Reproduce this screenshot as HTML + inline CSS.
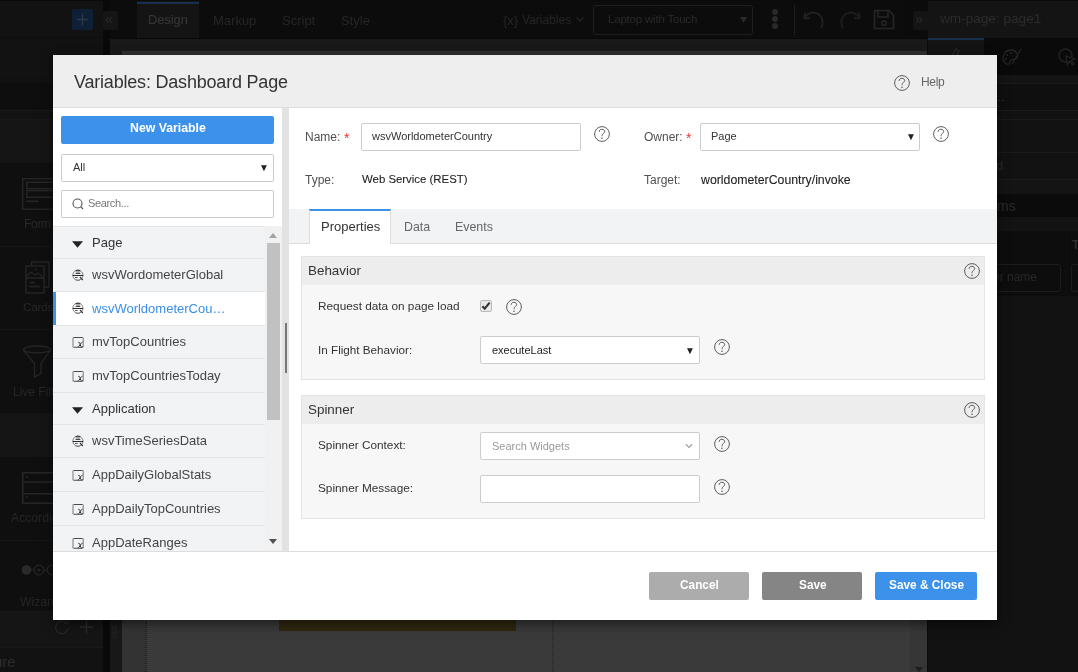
<!DOCTYPE html>
<html><head><meta charset="utf-8">
<style>
*{box-sizing:border-box;margin:0;padding:0}
html,body{width:1078px;height:672px;overflow:hidden;background:#121212;font-family:"Liberation Sans",sans-serif}
.a{position:absolute}
.t{position:absolute;white-space:nowrap;line-height:1;will-change:transform}
#bg{position:absolute;left:0;top:0;width:1078px;height:672px;overflow:hidden}
#dlg{position:absolute;left:53px;top:55px;width:944px;height:565px;background:#fff;overflow:hidden;box-shadow:0 4px 10px rgba(0,0,0,.5)}
</style></head><body>
<div id="bg">
<div class="a" style="left:0px;top:0px;width:1078px;height:672px;background:#121212"></div>
<div class="a" style="left:0px;top:0px;width:1078px;height:1px;background:#0a0a0a"></div>
<div class="a" style="left:110px;top:1px;width:818px;height:37px;background:#0c0c0c"></div>
<div class="a" style="left:0px;top:1px;width:103px;height:37px;background:#121212"></div>
<div class="a" style="left:103px;top:0px;width:7px;height:672px;background:#090909"></div>
<div class="a" style="left:72px;top:9px;width:21px;height:21px;background:#0f2036;border-radius:2px"></div>
<svg class="a" style="left:76px;top:13px" width="13" height="13" viewBox="0 0 13 13"><path d="M6.5 1 V12 M1 6.5 H12" stroke="#2a3a4a" stroke-width="1.3"/></svg>
<div class="a" style="left:103px;top:11px;width:15px;height:19px;background:#151515;border-radius:2px"></div>
<div class="t" style="left:105px;top:12.15px;font-size:14px;color:#2c2c2c;font-weight:400;letter-spacing:0px;">&laquo;</div>
<div class="a" style="left:137px;top:1px;width:62px;height:37px;background:#141414"></div>
<div class="a" style="left:137px;top:2px;width:62px;height:2px;background:#17304d"></div>
<div class="t" style="left:148px;top:13.66px;font-size:12.8px;color:#363636;font-weight:400;letter-spacing:0px;-webkit-text-stroke:0.2px #363636">Design</div>
<div class="t" style="left:213px;top:13.50px;font-size:13px;color:#262626;font-weight:400;letter-spacing:0px;">Markup</div>
<div class="t" style="left:281.8px;top:13.50px;font-size:13px;color:#262626;font-weight:400;letter-spacing:0px;">Script</div>
<div class="t" style="left:340.5px;top:13.50px;font-size:13px;color:#262626;font-weight:400;letter-spacing:0px;">Style</div>
<div class="t" style="left:502.5px;top:13.50px;font-size:13px;color:#262626;font-weight:400;letter-spacing:0px;">{x}</div>
<div class="t" style="left:521.7px;top:14.14px;font-size:12px;color:#262626;font-weight:400;letter-spacing:0px;">Variables</div>
<svg class="a" style="left:576px;top:17px" width="8" height="5" viewBox="0 0 8 5"><path d="M0.5 0.5 L4 4 L7.5 0.5" fill="none" stroke="#262626" stroke-width="1.1"/></svg>
<div class="a" style="left:593px;top:5px;width:160px;height:30px;border:1px solid #1f1f1f;border-radius:3px"></div>
<div class="t" style="left:608px;top:14.47px;font-size:11.5px;color:#2a2a2a;font-weight:400;letter-spacing:-0.2px;">Laptop with Touch</div>
<svg class="a" style="left:740px;top:17px" width="7" height="6" viewBox="0 0 7 6"><path d="M0 0 H7 L3.5 6Z" fill="#2a2a2a"/></svg>
<div class="a" style="left:772px;top:9px;width:6px;height:6px;border-radius:50%;background:#2a2a2a"></div>
<div class="a" style="left:772px;top:16px;width:6px;height:6px;border-radius:50%;background:#2a2a2a"></div>
<div class="a" style="left:772px;top:23px;width:6px;height:6px;border-radius:50%;background:#2a2a2a"></div>
<div class="a" style="left:794px;top:5px;width:1px;height:30px;background:#1c1c1c"></div>
<svg class="a" style="left:802px;top:10px" width="24" height="20" viewBox="0 0 24 20"><path d="M2 8.5 L3.2 2.5 M2 8.5 L8 8" fill="none" stroke="#222" stroke-width="1.8"/><path d="M2.8 7.6 C6 2 14 0.5 18.5 6 C21.5 10 21 15 19 18" fill="none" stroke="#222" stroke-width="1.8"/></svg>
<svg class="a" style="left:838px;top:10px" width="24" height="20" viewBox="0 0 24 20"><path d="M22 8.5 L20.8 2.5 M22 8.5 L16 8" fill="none" stroke="#1e1e1e" stroke-width="1.8"/><path d="M21.2 7.6 C18 2 10 0.5 5.5 6 C2.5 10 3 15 5 18" fill="none" stroke="#1e1e1e" stroke-width="1.8"/></svg>
<svg class="a" style="left:873px;top:9px" width="22" height="21" viewBox="0 0 22 21"><path d="M1.5 1.5 H16 L20.5 6 V19.5 H1.5 Z M5 1.5 V8 H15 V1.5" fill="none" stroke="#262626" stroke-width="1.6"/><circle cx="11" cy="14" r="2.3" fill="none" stroke="#262626" stroke-width="1.5"/></svg>
<div class="a" style="left:903px;top:1px;width:25px;height:37px;background:#0b0b0b"></div>
<div class="a" style="left:913px;top:11px;width:15px;height:19px;background:#141414;border-radius:2px"></div>
<div class="t" style="left:915px;top:12.15px;font-size:14px;color:#2c2c2c;font-weight:400;letter-spacing:0px;">&raquo;</div>
<div class="a" style="left:928px;top:1px;width:150px;height:37px;background:#141414"></div>
<div class="t" style="left:940px;top:12.49px;font-size:13.6px;color:#2c2c2c;font-weight:400;letter-spacing:0px;">wm-page: page1</div>
<div class="a" style="left:928px;top:38px;width:150px;height:37px;background:#0a0a0a"></div>
<div class="a" style="left:928px;top:38px;width:56px;height:37px;background:#141414"></div>
<div class="a" style="left:928px;top:38px;width:56px;height:2px;background:#17304d"></div>
<svg class="a" style="left:944px;top:46px" width="20" height="20" viewBox="0 0 20 20"><path d="M12 3 L15 5 L8 16 L6 14 Z" fill="none" stroke="#262626" stroke-width="1.5"/></svg>
<svg class="a" style="left:1002px;top:48px" width="20" height="18" viewBox="0 0 20 18"><path d="M9 2 C3 2 1 7 1 10 C1 14 4 17 7 16 C9 15 7 13 9 12 C11 11 14 12 15 10 C17 7 14 2 9 2 Z" fill="none" stroke="#242424" stroke-width="1.3"/><circle cx="5" cy="7" r="1" fill="#242424"/><circle cx="9" cy="5" r="1" fill="#242424"/><circle cx="4" cy="11" r="1" fill="#242424"/><path d="M19 1 L10 16" stroke="#242424" stroke-width="1.3"/></svg>
<svg class="a" style="left:1058px;top:48px" width="20" height="18" viewBox="0 0 20 18"><circle cx="7.5" cy="7.5" r="6.5" fill="none" stroke="#242424" stroke-width="1.4"/><path d="M8 8 L17 11 L13 12.5 L16 16 L14.5 17 L11.5 13.5 L9.5 16.5 Z" fill="#0a0a0a" stroke="#242424" stroke-width="1.2"/></svg>
<div class="a" style="left:928px;top:75px;width:150px;height:8px;background:#141414"></div>
<div class="a" style="left:928px;top:83px;width:150px;height:1px;background:#1b1b1b"></div>
<div class="a" style="left:928px;top:84px;width:150px;height:26px;background:#0f0f0f"></div>
<div class="a" style="left:928px;top:110px;width:150px;height:1px;background:#1b1b1b"></div>
<div class="a" style="left:998px;top:100px;width:2px;height:1px;background:#262626"></div>
<div class="a" style="left:1002px;top:100px;width:2px;height:1px;background:#262626"></div>
<div class="a" style="left:997px;top:106px;width:2px;height:1px;background:#262626"></div>
<div class="a" style="left:928px;top:119px;width:150px;height:1px;background:#1a1a1a"></div>
<div class="a" style="left:928px;top:152px;width:150px;height:1px;background:#1a1a1a"></div>
<div class="t" style="left:996px;top:158.50px;font-size:13px;color:#2a2a2a;font-weight:400;letter-spacing:0px;">d</div>
<div class="a" style="left:928px;top:179px;width:150px;height:1px;background:#1b1b1b"></div>
<div class="a" style="left:928px;top:180px;width:150px;height:14px;background:#141414"></div>
<div class="a" style="left:928px;top:194px;width:150px;height:23px;background:#0b0b0b"></div>
<div class="t" style="left:997px;top:198.65px;font-size:14px;color:#2b2b2b;font-weight:400;letter-spacing:0px;">ms</div>
<div class="a" style="left:928px;top:217px;width:150px;height:14px;background:#131313"></div>
<div class="a" style="left:928px;top:231px;width:150px;height:441px;background:#0d0d0d"></div>
<div class="a" style="left:928px;top:296px;width:150px;height:376px;background:#121212"></div>
<div class="t" style="left:1072px;top:238.84px;font-size:12px;color:#2e2e2e;font-weight:700;letter-spacing:0px;">T</div>
<div class="a" style="left:960px;top:264px;width:101px;height:28px;border:1px solid #1c1c1c;border-radius:3px"></div>
<div class="t" style="left:993px;top:270.84px;font-size:12px;color:#282828;font-weight:400;letter-spacing:0px;">er name</div>
<div class="a" style="left:1071px;top:264px;width:19px;height:28px;border:1px solid #1c1c1c;border-radius:3px"></div>
<div class="a" style="left:1066px;top:231px;width:1px;height:65px;background:#101010"></div>
<div class="a" style="left:0px;top:37px;width:103px;height:1px;background:#0e0e0e"></div>
<div class="a" style="left:0px;top:73px;width:103px;height:1px;background:#161616"></div>
<div class="a" style="left:0px;top:83px;width:103px;height:27px;background:#0e0e0e"></div>
<div class="a" style="left:0px;top:110px;width:103px;height:1px;background:#181818"></div>
<div class="a" style="left:0px;top:119px;width:103px;height:1px;background:#181818"></div>
<div class="a" style="left:0px;top:120px;width:103px;height:43px;background:#151515"></div>
<div class="a" style="left:0px;top:163px;width:103px;height:448px;background:#0f0f0f"></div>
<svg class="a" style="left:22px;top:178px" width="40" height="32" viewBox="0 0 40 32"><rect x="0.7" y="0.7" width="38" height="30.5" fill="none" stroke="#252525" stroke-width="1.4"/><rect x="4.8" y="4.3" width="30" height="6.3" fill="none" stroke="#262626" stroke-width="1.5"/><rect x="4.8" y="12.6" width="30" height="6.6" fill="none" stroke="#262626" stroke-width="1.5"/><path d="M4.5 23.3 H16.5" stroke="#262626" stroke-width="1.7"/></svg>
<div class="t" style="left:24.4px;top:217.84px;font-size:12px;color:#282828;font-weight:400;letter-spacing:-0.3px;">Form</div>
<div class="a" style="left:0px;top:246px;width:103px;height:1px;background:#161616"></div>
<svg class="a" style="left:25px;top:261px" width="28" height="34" viewBox="0 0 28 34"><path d="M6.5 5 V1 H24 V26 H19" fill="none" stroke="#252525" stroke-width="1.4"/><rect x="1" y="5" width="18" height="27" fill="none" stroke="#252525" stroke-width="1.4"/><path d="M1 16 L6 11 L10 14 L13 12 L19 17 M1 17 H19 M4.5 21.5 H10 M4.5 25.5 H15" fill="none" stroke="#252525" stroke-width="1.3"/><circle cx="11" cy="8.5" r="0.9" fill="#252525"/></svg>
<div class="t" style="left:22.6px;top:301.51px;font-size:11.8px;color:#282828;font-weight:400;letter-spacing:-0.3px;">Cards</div>
<div class="a" style="left:0px;top:329px;width:103px;height:1px;background:#161616"></div>
<svg class="a" style="left:22px;top:345px" width="34" height="34" viewBox="0 0 34 34"><ellipse cx="15" cy="4.5" rx="13.5" ry="3.5" fill="none" stroke="#262626" stroke-width="1.3"/><path d="M1.5 5 L12.5 18.5 V32 L19 28.5 V18.5 L28.5 5" fill="none" stroke="#262626" stroke-width="1.3"/></svg>
<div class="t" style="left:12.9px;top:385.54px;font-size:12px;color:#262626;font-weight:400;letter-spacing:0px;">Live Filter</div>
<div class="a" style="left:0px;top:413px;width:103px;height:44px;background:#151515"></div>
<svg class="a" style="left:22px;top:472px" width="40" height="32" viewBox="0 0 40 32"><rect x="0.8" y="0.8" width="38" height="30.4" fill="none" stroke="#262626" stroke-width="1.6"/><path d="M0.7 10 H39 M0.7 21.8 H39" stroke="#262626" stroke-width="1.6"/><path d="M4 5 H6 M4 25 H6" stroke="#303030" stroke-width="1.2"/></svg>
<div class="t" style="left:11.3px;top:511.97px;font-size:12.2px;color:#262626;font-weight:400;letter-spacing:0px;">Accordion</div>
<div class="a" style="left:0px;top:540px;width:103px;height:1px;background:#151515"></div>
<svg class="a" style="left:21px;top:563px" width="40" height="14" viewBox="0 0 40 14"><circle cx="5.5" cy="7" r="4.8" fill="#2a2a2a"/><path d="M10 7 H13" stroke="#262626"/><circle cx="18" cy="7" r="4.8" fill="none" stroke="#262626" stroke-width="1.2"/><circle cx="18" cy="7" r="1.6" fill="#262626"/><path d="M23 7 H26" stroke="#262626"/><circle cx="31" cy="7" r="4.8" fill="none" stroke="#262626" stroke-width="1.2"/></svg>
<div class="t" style="left:20.3px;top:595.57px;font-size:12.2px;color:#262626;font-weight:400;letter-spacing:0px;">Wizard</div>
<div class="a" style="left:0px;top:611px;width:103px;height:1px;background:#171717"></div>
<div class="a" style="left:0px;top:612px;width:103px;height:35px;background:#151515"></div>
<svg class="a" style="left:54px;top:620px" width="16" height="15" viewBox="0 0 16 15"><path d="M13 4 A6.2 6.2 0 1 0 14 8" fill="none" stroke="#262626" stroke-width="1.3"/><path d="M10 2.5 L13.5 4 L13.8 0.5" fill="none" stroke="#262626" stroke-width="1.3"/></svg>
<svg class="a" style="left:79px;top:620px" width="15" height="14" viewBox="0 0 15 14"><path d="M7.5 0.5 V13.5 M1 7 H14" stroke="#2c2c2c" stroke-width="1.4"/></svg>
<div class="a" style="left:0px;top:647px;width:103px;height:1px;background:#191919"></div>
<div class="t" style="left:0px;top:654.30px;font-size:15px;color:#2c2c2c;font-weight:400;letter-spacing:0px;margin-left:-6px">ure</div>
<div class="a" style="left:110px;top:38px;width:818px;height:634px;background:#191919"></div>
<div class="a" style="left:110px;top:38px;width:818px;height:1px;background:#080808"></div>
<div class="a" style="left:122px;top:51px;width:806px;height:621px;background:#3a3a3a"></div>
<div class="a" style="left:122px;top:51px;width:805px;height:4px;background:#2f2f2f"></div>
<div class="a" style="left:110px;top:55px;width:12px;height:617px;background:#181818"></div>
<div class="a" style="left:122px;top:55px;width:24px;height:617px;background:#333"></div>
<div class="a" style="left:145px;top:55px;width:2px;height:617px;background:repeating-linear-gradient(#222 0 1px,#3a3a3a 1px 2px)"></div>
<div class="a" style="left:552px;top:55px;width:2px;height:617px;background:repeating-linear-gradient(#2a2a2a 0 1px,#3a3a3a 1px 2px)"></div>
<div class="a" style="left:279px;top:620px;width:237px;height:11px;background:#2f2710"></div>
<div class="a" style="left:910px;top:55px;width:17px;height:617px;background:#363636"></div>
<div class="a" style="left:927px;top:38px;width:1px;height:634px;background:#0b0b0b"></div>
<svg class="a" style="left:915px;top:667px" width="8" height="5" viewBox="0 0 8 5"><path d="M0 0 H8 L4 5Z" fill="#1e1e1e"/></svg>
<div class="t" style="left:117.5px;top:625px;font-size:8px;color:#262626;transform:rotate(90deg);transform-origin:0 0">650</div>
</div>
<div id="dlg">
<div class="a" style="left:0px;top:0px;width:944px;height:52px;background:#eee"></div>
<div class="a" style="left:0px;top:51px;width:944px;height:1px;background:#f0f0f0"></div>
<div class="a" style="left:0px;top:52px;width:944px;height:1px;background:#dcdcdc"></div>
<div class="t" style="left:21.00px;top:17.76px;font-size:18px;color:#333;font-weight:400;letter-spacing:-0.2px;">Variables: Dashboard Page</div>
<svg class="a" style="left:841px;top:20px" width="16" height="16" viewBox="0 0 16 16"><circle cx="8" cy="8" r="7.4" fill="none" stroke="#5c5c5c" stroke-width="1"/><path d="M5.1 5.9 C5.1 4.2 6.4 3.3 7.9 3.3 C9.5 3.3 10.7 4.3 10.7 5.7 C10.7 7.3 8.1 7.6 8.1 9.4 V10.3" fill="none" stroke="#5c5c5c" stroke-width="1"/><circle cx="8" cy="12.3" r="0.8" fill="#5c5c5c"/></svg>
<div class="t" style="left:867.70px;top:20.84px;font-size:12px;color:#666;font-weight:400;letter-spacing:-0.35px;">Help</div>
<div class="a" style="left:8px;top:61px;width:213px;height:28px;background:#3c92ea;border-radius:2px"></div>
<div class="t" style="left:77.00px;top:67.39px;font-size:12.3px;color:#fff;font-weight:700;letter-spacing:0px;">New Variable</div>
<div class="a" style="left:8px;top:99px;width:213px;height:28px;background:#fff;border:1px solid #ccc;border-radius:2px"></div>
<div class="t" style="left:19.70px;top:106.69px;font-size:11px;color:#333;font-weight:400;letter-spacing:0px;">All</div>
<div class="t" style="left:206.00px;top:108.03px;font-size:10px;color:#222;font-weight:400;letter-spacing:0px;">&#9660;</div>
<div class="a" style="left:8px;top:135px;width:213px;height:28px;background:#fff;border:1px solid #ccc;border-radius:2px"></div>
<svg class="a" style="left:19px;top:143px" width="12" height="12" viewBox="0 0 12 12"><circle cx="5.5" cy="5.5" r="4.5" fill="none" stroke="#555" stroke-width="1.1"/><path d="M8.7 8.7 L11 11" stroke="#555" stroke-width="1.2"/></svg>
<div class="t" style="left:34.70px;top:142.69px;font-size:11px;color:#777;font-weight:400;letter-spacing:-0.35px;">Search...</div>
<div class="a" style="left:0px;top:171px;width:229px;height:325px;background:#f2f3f5"></div>
<div class="a" style="left:0px;top:171px;width:212px;height:1px;background:#e3e6e8"></div>
<div class="a" style="left:0px;top:203px;width:212px;height:1px;background:#e1e5e8"></div>
<svg class="a" style="left:19px;top:186px" width="11" height="7" viewBox="0 0 11 7"><path d="M0 0.3 H11 L5.5 6.8 Z" fill="#222"/></svg>
<div class="t" style="left:39.00px;top:180.60px;font-size:13px;color:#333;font-weight:400;letter-spacing:0px;">Page</div>
<div class="a" style="left:0px;top:236px;width:212px;height:1px;background:#e1e5e8"></div>
<svg class="a" style="left:19px;top:214px" width="12" height="12" viewBox="0 0 12 12"><circle cx="5.9" cy="6.2" r="5.1" fill="none" stroke="#808080" stroke-width="1"/><path d="M3.8 1.9 Q6 1.1 8.2 1.9 L7.6 4.2 H4.4 Z" fill="#aaa"/><path d="M3.6 1.6 Q6 0.7 8.3 1.6" fill="none" stroke="#333" stroke-width="1"/><path d="M3.6 4.5 H8.3" stroke="#444" stroke-width="1"/><path d="M0.8 6.5 H11.1" stroke="#2a2a2a" stroke-width="1"/><path d="M3 8.5 H5.6" stroke="#555" stroke-width="1"/><path d="M8 8 L10.8 11" stroke="#333" stroke-width="1.1"/><path d="M3.8 10.9 Q6 11.7 8 11" fill="none" stroke="#777" stroke-width="0.9"/></svg>
<div class="t" style="left:39.00px;top:213.10px;font-size:13px;color:#444;font-weight:400;letter-spacing:0px;">wsvWordometerGlobal</div>
<div class="a" style="left:0px;top:237px;width:212px;height:33px;background:#fff"></div>
<div class="a" style="left:0px;top:237px;width:3px;height:33px;background:#3c92ea"></div>
<div class="a" style="left:0px;top:270px;width:212px;height:1px;background:#e1e5e8"></div>
<svg class="a" style="left:19px;top:247px" width="12" height="12" viewBox="0 0 12 12"><circle cx="5.9" cy="6.2" r="5.1" fill="none" stroke="#808080" stroke-width="1"/><path d="M3.8 1.9 Q6 1.1 8.2 1.9 L7.6 4.2 H4.4 Z" fill="#aaa"/><path d="M3.6 1.6 Q6 0.7 8.3 1.6" fill="none" stroke="#333" stroke-width="1"/><path d="M3.6 4.5 H8.3" stroke="#444" stroke-width="1"/><path d="M0.8 6.5 H11.1" stroke="#2a2a2a" stroke-width="1"/><path d="M3 8.5 H5.6" stroke="#555" stroke-width="1"/><path d="M8 8 L10.8 11" stroke="#333" stroke-width="1.1"/><path d="M3.8 10.9 Q6 11.7 8 11" fill="none" stroke="#777" stroke-width="0.9"/></svg>
<div class="t" style="left:39.00px;top:246.60px;font-size:13px;color:#3a8ee6;font-weight:400;letter-spacing:0px;">wsvWorldometerCou&hellip;</div>
<div class="a" style="left:0px;top:303px;width:212px;height:1px;background:#e1e5e8"></div>
<svg class="a" style="left:19px;top:281px" width="12" height="12" viewBox="0 0 12 12"><path d="M1 1.5 V11.3 M11.2 1.5 V11.3" stroke="#777" stroke-width="1"/><path d="M1.5 1.5 H10.7 M1.5 11.3 H10.7" stroke="#4a4a4a" stroke-width="1.1"/><path d="M6.3 6.4 Q7.3 5.9 7.8 7.1 L8.7 10.2 Q9.2 11.1 10.6 10.6 M10.6 6.1 Q9.6 6.1 8.3 8.2 L7.1 10.2 Q6.5 11 5.8 10.7" fill="none" stroke="#3a3a3a" stroke-width="1"/></svg>
<div class="t" style="left:39.00px;top:280.10px;font-size:13px;color:#444;font-weight:400;letter-spacing:0px;">mvTopCountries</div>
<div class="a" style="left:0px;top:337px;width:212px;height:1px;background:#e1e5e8"></div>
<svg class="a" style="left:19px;top:315px" width="12" height="12" viewBox="0 0 12 12"><path d="M1 1.5 V11.3 M11.2 1.5 V11.3" stroke="#777" stroke-width="1"/><path d="M1.5 1.5 H10.7 M1.5 11.3 H10.7" stroke="#4a4a4a" stroke-width="1.1"/><path d="M6.3 6.4 Q7.3 5.9 7.8 7.1 L8.7 10.2 Q9.2 11.1 10.6 10.6 M10.6 6.1 Q9.6 6.1 8.3 8.2 L7.1 10.2 Q6.5 11 5.8 10.7" fill="none" stroke="#3a3a3a" stroke-width="1"/></svg>
<div class="t" style="left:39.00px;top:313.60px;font-size:13px;color:#444;font-weight:400;letter-spacing:0px;">mvTopCountriesToday</div>
<div class="a" style="left:0px;top:369px;width:212px;height:1px;background:#e1e5e8"></div>
<svg class="a" style="left:19px;top:352px" width="11" height="7" viewBox="0 0 11 7"><path d="M0 0.3 H11 L5.5 6.8 Z" fill="#222"/></svg>
<div class="t" style="left:39.00px;top:346.60px;font-size:13px;color:#333;font-weight:400;letter-spacing:0px;">Application</div>
<div class="a" style="left:0px;top:402px;width:212px;height:1px;background:#e1e5e8"></div>
<svg class="a" style="left:19px;top:380px" width="12" height="12" viewBox="0 0 12 12"><circle cx="5.9" cy="6.2" r="5.1" fill="none" stroke="#808080" stroke-width="1"/><path d="M3.8 1.9 Q6 1.1 8.2 1.9 L7.6 4.2 H4.4 Z" fill="#aaa"/><path d="M3.6 1.6 Q6 0.7 8.3 1.6" fill="none" stroke="#333" stroke-width="1"/><path d="M3.6 4.5 H8.3" stroke="#444" stroke-width="1"/><path d="M0.8 6.5 H11.1" stroke="#2a2a2a" stroke-width="1"/><path d="M3 8.5 H5.6" stroke="#555" stroke-width="1"/><path d="M8 8 L10.8 11" stroke="#333" stroke-width="1.1"/><path d="M3.8 10.9 Q6 11.7 8 11" fill="none" stroke="#777" stroke-width="0.9"/></svg>
<div class="t" style="left:39.00px;top:379.10px;font-size:13px;color:#444;font-weight:400;letter-spacing:0px;">wsvTimeSeriesData</div>
<div class="a" style="left:0px;top:436px;width:212px;height:1px;background:#e1e5e8"></div>
<svg class="a" style="left:19px;top:414px" width="12" height="12" viewBox="0 0 12 12"><path d="M1 1.5 V11.3 M11.2 1.5 V11.3" stroke="#777" stroke-width="1"/><path d="M1.5 1.5 H10.7 M1.5 11.3 H10.7" stroke="#4a4a4a" stroke-width="1.1"/><path d="M6.3 6.4 Q7.3 5.9 7.8 7.1 L8.7 10.2 Q9.2 11.1 10.6 10.6 M10.6 6.1 Q9.6 6.1 8.3 8.2 L7.1 10.2 Q6.5 11 5.8 10.7" fill="none" stroke="#3a3a3a" stroke-width="1"/></svg>
<div class="t" style="left:39.00px;top:412.60px;font-size:13px;color:#444;font-weight:400;letter-spacing:0px;">AppDailyGlobalStats</div>
<div class="a" style="left:0px;top:470px;width:212px;height:1px;background:#e1e5e8"></div>
<svg class="a" style="left:19px;top:448px" width="12" height="12" viewBox="0 0 12 12"><path d="M1 1.5 V11.3 M11.2 1.5 V11.3" stroke="#777" stroke-width="1"/><path d="M1.5 1.5 H10.7 M1.5 11.3 H10.7" stroke="#4a4a4a" stroke-width="1.1"/><path d="M6.3 6.4 Q7.3 5.9 7.8 7.1 L8.7 10.2 Q9.2 11.1 10.6 10.6 M10.6 6.1 Q9.6 6.1 8.3 8.2 L7.1 10.2 Q6.5 11 5.8 10.7" fill="none" stroke="#3a3a3a" stroke-width="1"/></svg>
<div class="t" style="left:39.00px;top:446.60px;font-size:13px;color:#444;font-weight:400;letter-spacing:0px;">AppDailyTopCountries</div>
<svg class="a" style="left:19px;top:482px" width="12" height="12" viewBox="0 0 12 12"><path d="M1 1.5 V11.3 M11.2 1.5 V11.3" stroke="#777" stroke-width="1"/><path d="M1.5 1.5 H10.7 M1.5 11.3 H10.7" stroke="#4a4a4a" stroke-width="1.1"/><path d="M6.3 6.4 Q7.3 5.9 7.8 7.1 L8.7 10.2 Q9.2 11.1 10.6 10.6 M10.6 6.1 Q9.6 6.1 8.3 8.2 L7.1 10.2 Q6.5 11 5.8 10.7" fill="none" stroke="#3a3a3a" stroke-width="1"/></svg>
<div class="t" style="left:39.00px;top:480.60px;font-size:13px;color:#444;font-weight:400;letter-spacing:0px;">AppDateRanges</div>
<div class="a" style="left:212px;top:171px;width:17px;height:325px;background:#f1f1f1"></div>
<div class="a" style="left:214px;top:188px;width:13px;height:177px;background:#c1c1c1"></div>
<svg class="a" style="left:216px;top:178px" width="8" height="5" viewBox="0 0 8 5"><path d="M0 5 L4 0 L8 5Z" fill="#a3a3a3"/></svg>
<svg class="a" style="left:216px;top:484px" width="8" height="5" viewBox="0 0 8 5"><path d="M0 0 L4 5 L8 0Z" fill="#505050"/></svg>
<div class="a" style="left:229px;top:53px;width:7px;height:443px;background:#e2e2e2"></div>
<div class="a" style="left:232px;top:268px;width:2px;height:50px;background:#777"></div>
<div class="a" style="left:0px;top:496px;width:944px;height:1px;background:#ddd"></div>
<div class="t" style="left:252.00px;top:76.24px;font-size:12px;color:#505050;font-weight:400;letter-spacing:0px;">Name:</div>
<div class="t" style="left:290.50px;top:76.35px;font-size:14px;color:#e33;font-weight:400;letter-spacing:0px;">*</div>
<div class="a" style="left:308px;top:68px;width:220px;height:28px;background:#fff;border:1px solid #ccc;border-radius:2px"></div>
<div class="t" style="left:319.30px;top:75.69px;font-size:11px;color:#333;font-weight:400;letter-spacing:0px;">wsvWorldometerCountry</div>
<svg class="a" style="left:541px;top:71px" width="16" height="16" viewBox="0 0 16 16"><circle cx="8" cy="8" r="7.4" fill="none" stroke="#5c5c5c" stroke-width="1"/><path d="M5.1 5.9 C5.1 4.2 6.4 3.3 7.9 3.3 C9.5 3.3 10.7 4.3 10.7 5.7 C10.7 7.3 8.1 7.6 8.1 9.4 V10.3" fill="none" stroke="#5c5c5c" stroke-width="1"/><circle cx="8" cy="12.3" r="0.8" fill="#5c5c5c"/></svg>
<div class="t" style="left:252.00px;top:118.84px;font-size:12px;color:#505050;font-weight:400;letter-spacing:0px;">Type:</div>
<div class="t" style="left:308.80px;top:119.35px;font-size:11.4px;color:#222;font-weight:400;letter-spacing:0px;-webkit-text-stroke:0.1px #222">Web Service (REST)</div>
<div class="t" style="left:590.70px;top:76.24px;font-size:12px;color:#505050;font-weight:400;letter-spacing:0px;">Owner:</div>
<div class="t" style="left:632.50px;top:76.35px;font-size:14px;color:#e33;font-weight:400;letter-spacing:0px;">*</div>
<div class="a" style="left:647px;top:68px;width:220px;height:28px;background:#fff;border:1px solid #ccc;border-radius:2px"></div>
<div class="t" style="left:658.30px;top:75.69px;font-size:11px;color:#333;font-weight:400;letter-spacing:0px;">Page</div>
<div class="t" style="left:852.50px;top:77.03px;font-size:10px;color:#222;font-weight:400;letter-spacing:0px;">&#9660;</div>
<svg class="a" style="left:880px;top:71px" width="16" height="16" viewBox="0 0 16 16"><circle cx="8" cy="8" r="7.4" fill="none" stroke="#5c5c5c" stroke-width="1"/><path d="M5.1 5.9 C5.1 4.2 6.4 3.3 7.9 3.3 C9.5 3.3 10.7 4.3 10.7 5.7 C10.7 7.3 8.1 7.6 8.1 9.4 V10.3" fill="none" stroke="#5c5c5c" stroke-width="1"/><circle cx="8" cy="12.3" r="0.8" fill="#5c5c5c"/></svg>
<div class="t" style="left:590.70px;top:118.84px;font-size:12px;color:#505050;font-weight:400;letter-spacing:0px;">Target:</div>
<div class="t" style="left:647.50px;top:118.59px;font-size:12.3px;color:#222;font-weight:400;letter-spacing:0px;-webkit-text-stroke:0.1px #222">worldometerCountry/invoke</div>
<div class="a" style="left:236px;top:154px;width:708px;height:35px;background:#f2f3f5"></div>
<div class="a" style="left:236px;top:188px;width:708px;height:1px;background:#ddd"></div>
<div class="a" style="left:256px;top:154px;width:82px;height:35px;background:#fff;border-left:1px solid #ddd;border-right:1px solid #ddd;border-top:2px solid #3c92ea"></div>
<div class="t" style="left:267.70px;top:165.00px;font-size:13px;color:#333;font-weight:400;letter-spacing:0px;">Properties</div>
<div class="t" style="left:351.40px;top:165.50px;font-size:12.4px;color:#666;font-weight:400;letter-spacing:0px;">Data</div>
<div class="t" style="left:402.40px;top:165.50px;font-size:12.4px;color:#666;font-weight:400;letter-spacing:0px;">Events</div>
<div class="a" style="left:248px;top:201px;width:684px;height:124px;background:#f7f7f7;border:1px solid #e3e3e3"></div>
<div class="a" style="left:249px;top:202px;width:682px;height:28px;background:#ededed"></div>
<div class="t" style="left:255.00px;top:208.86px;font-size:13.4px;color:#333;font-weight:400;letter-spacing:0px;">Behavior</div>
<svg class="a" style="left:910.5px;top:208.0px" width="16" height="16" viewBox="0 0 16 16"><circle cx="8" cy="8" r="7.4" fill="none" stroke="#5c5c5c" stroke-width="1"/><path d="M5.1 5.9 C5.1 4.2 6.4 3.3 7.9 3.3 C9.5 3.3 10.7 4.3 10.7 5.7 C10.7 7.3 8.1 7.6 8.1 9.4 V10.3" fill="none" stroke="#5c5c5c" stroke-width="1"/><circle cx="8" cy="12.3" r="0.8" fill="#5c5c5c"/></svg>
<div class="t" style="left:265.00px;top:246.21px;font-size:11.8px;color:#333;font-weight:400;letter-spacing:0px;">Request data on page load</div>
<div class="a" style="left:427px;top:245px;width:12px;height:12px;background:#e8e8e8;border:1px solid #bbb;border-radius:2px"></div>
<svg class="a" style="left:427px;top:245px" width="12" height="12" viewBox="0 0 12 12"><path d="M2.4 6.3 L4.7 8.7 L9.6 2.6" fill="none" stroke="#333" stroke-width="2.1"/></svg>
<svg class="a" style="left:453px;top:244px" width="16" height="16" viewBox="0 0 16 16"><circle cx="8" cy="8" r="7.4" fill="none" stroke="#5c5c5c" stroke-width="1"/><path d="M5.1 5.9 C5.1 4.2 6.4 3.3 7.9 3.3 C9.5 3.3 10.7 4.3 10.7 5.7 C10.7 7.3 8.1 7.6 8.1 9.4 V10.3" fill="none" stroke="#5c5c5c" stroke-width="1"/><circle cx="8" cy="12.3" r="0.8" fill="#5c5c5c"/></svg>
<div class="t" style="left:265.00px;top:289.30px;font-size:11.7px;color:#333;font-weight:400;letter-spacing:0px;">In Flight Behavior:</div>
<div class="a" style="left:427px;top:281px;width:220px;height:28px;background:#fff;border:1px solid #ccc;border-radius:2px"></div>
<div class="t" style="left:438.70px;top:289.69px;font-size:11px;color:#222;font-weight:400;letter-spacing:0px;">executeLast</div>
<div class="t" style="left:632.00px;top:291.04px;font-size:10px;color:#222;font-weight:400;letter-spacing:0px;">&#9660;</div>
<svg class="a" style="left:660.5px;top:284px" width="16" height="16" viewBox="0 0 16 16"><circle cx="8" cy="8" r="7.4" fill="none" stroke="#5c5c5c" stroke-width="1"/><path d="M5.1 5.9 C5.1 4.2 6.4 3.3 7.9 3.3 C9.5 3.3 10.7 4.3 10.7 5.7 C10.7 7.3 8.1 7.6 8.1 9.4 V10.3" fill="none" stroke="#5c5c5c" stroke-width="1"/><circle cx="8" cy="12.3" r="0.8" fill="#5c5c5c"/></svg>
<div class="a" style="left:248px;top:340px;width:684px;height:124px;background:#f7f7f7;border:1px solid #e3e3e3"></div>
<div class="a" style="left:249px;top:341px;width:682px;height:28px;background:#ededed"></div>
<div class="t" style="left:255.00px;top:347.66px;font-size:13.4px;color:#333;font-weight:400;letter-spacing:0px;">Spinner</div>
<svg class="a" style="left:910.5px;top:347.0px" width="16" height="16" viewBox="0 0 16 16"><circle cx="8" cy="8" r="7.4" fill="none" stroke="#5c5c5c" stroke-width="1"/><path d="M5.1 5.9 C5.1 4.2 6.4 3.3 7.9 3.3 C9.5 3.3 10.7 4.3 10.7 5.7 C10.7 7.3 8.1 7.6 8.1 9.4 V10.3" fill="none" stroke="#5c5c5c" stroke-width="1"/><circle cx="8" cy="12.3" r="0.8" fill="#5c5c5c"/></svg>
<div class="t" style="left:265.00px;top:385.11px;font-size:11.8px;color:#333;font-weight:400;letter-spacing:0px;">Spinner Context:</div>
<div class="a" style="left:427px;top:377px;width:220px;height:28px;background:#fff;border:1px solid #ccc;border-radius:2px"></div>
<div class="t" style="left:438.60px;top:385.69px;font-size:11px;color:#999;font-weight:400;letter-spacing:0px;">Search Widgets</div>
<svg class="a" style="left:631px;top:388px" width="10" height="6" viewBox="0 0 10 6"><path d="M1.8 1.2 L5 4.4 L8.2 1.2" fill="none" stroke="#999" stroke-width="1.1"/></svg>
<svg class="a" style="left:660.5px;top:380.5px" width="16" height="16" viewBox="0 0 16 16"><circle cx="8" cy="8" r="7.4" fill="none" stroke="#5c5c5c" stroke-width="1"/><path d="M5.1 5.9 C5.1 4.2 6.4 3.3 7.9 3.3 C9.5 3.3 10.7 4.3 10.7 5.7 C10.7 7.3 8.1 7.6 8.1 9.4 V10.3" fill="none" stroke="#5c5c5c" stroke-width="1"/><circle cx="8" cy="12.3" r="0.8" fill="#5c5c5c"/></svg>
<div class="t" style="left:265.00px;top:428.01px;font-size:11.8px;color:#333;font-weight:400;letter-spacing:0px;">Spinner Message:</div>
<div class="a" style="left:427px;top:420px;width:220px;height:28px;background:#fff;border:1px solid #ccc;border-radius:2px"></div>
<svg class="a" style="left:660.5px;top:423.5px" width="16" height="16" viewBox="0 0 16 16"><circle cx="8" cy="8" r="7.4" fill="none" stroke="#5c5c5c" stroke-width="1"/><path d="M5.1 5.9 C5.1 4.2 6.4 3.3 7.9 3.3 C9.5 3.3 10.7 4.3 10.7 5.7 C10.7 7.3 8.1 7.6 8.1 9.4 V10.3" fill="none" stroke="#5c5c5c" stroke-width="1"/><circle cx="8" cy="12.3" r="0.8" fill="#5c5c5c"/></svg>
<div class="a" style="left:596px;top:517px;width:100px;height:28px;background:#acacac;border-radius:2px"></div>
<div class="t" style="left:626.70px;top:524.87px;font-size:11.85px;color:#fff;font-weight:700;letter-spacing:0px;">Cancel</div>
<div class="a" style="left:709px;top:517px;width:100px;height:28px;background:#858585;border-radius:2px"></div>
<div class="t" style="left:745.50px;top:524.87px;font-size:11.85px;color:#fff;font-weight:700;letter-spacing:0px;">Save</div>
<div class="a" style="left:822px;top:517px;width:102px;height:28px;background:#3c92ea;border-radius:2px"></div>
<div class="t" style="left:836.00px;top:524.87px;font-size:11.85px;color:#fff;font-weight:700;letter-spacing:0px;">Save &amp; Close</div>

</div>
</body></html>
